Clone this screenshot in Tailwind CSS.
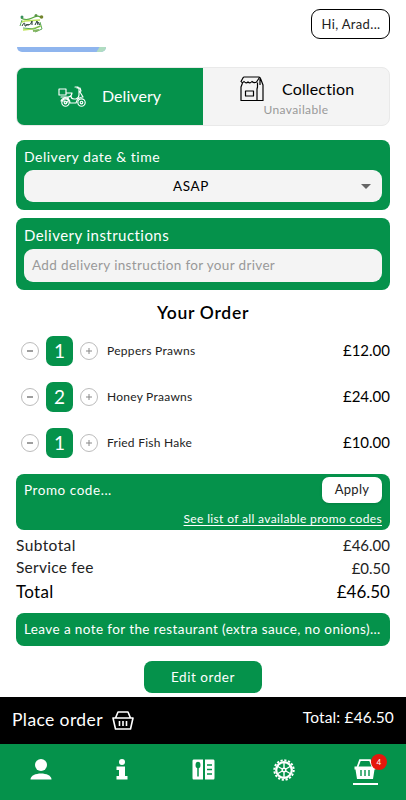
<!DOCTYPE html>
<html lang="en">
<head>
<meta charset="utf-8">
<title>Your order</title>
<script src="https://cdn.jsdelivr.net/npm/@tailwindcss/browser@4"></script>
</head>
<body class="flex h-[800px] w-[406px] flex-col overflow-hidden bg-white font-['Lato','Liberation_Sans',sans-serif] text-black">
<header class="flex h-[47px] shrink-0 items-start justify-between pr-4 pl-[18px] pt-[9px]">
  <svg class="mt-[4px]" width="28" height="22" viewBox="0 0 28 22" fill="none">
    <path d="M3 5q5 3 11 0t8-1" stroke="#56a83c" stroke-width="1.2"/>
    <path d="M4 9 7 8 22 7M5 17l9-1 9-3" stroke="#bfe45a" stroke-width="1.6"/>
    <path d="M2 13 4 7M5 15l11 1 6-3M22 9l2 7-7 3" stroke="#5cab59" stroke-width="1"/>
    <path d="M4 13q3-6 3 0 1 1 2-2 1 3 2 0 1 2 3-3v4M17 12l2-4 1 4M20 9l2 3" stroke="#253c33" stroke-width="1"/>
    <circle cx="4" cy="4" r="1.5" fill="#398f5d"/><circle cx="18" cy="2.500" r="1.500" fill="#5a9447"/><circle cx="23.500" cy="4" r="1.800" fill="#73842d"/>
    <path d="M15 18l6-1" stroke="#83b45f" stroke-width="2"/>
  </svg>
  <button class="h-[30px] w-[79px] rounded-[9px] border border-black pl-px text-[13px] leading-[28px] tracking-[0.35px] text-[#222]">Hi, Arad...</button>
</header>
<main class="flex h-[650px] shrink-0 flex-col px-4">
  <div class="ml-px flex h-[5px] w-[89px] shrink-0 justify-end overflow-hidden rounded-b-[8px] bg-[#8fb5ee]"><span class="h-[5px] w-[8px] -skew-x-[30deg] bg-[#b0dcc1]"></span></div>
  <section class="mt-[15px] flex h-[59px] shrink-0 overflow-hidden rounded-[8px] border border-[#e9e9e9] bg-[#f4f4f4]">
    <div class="-my-px -ml-px flex w-[187px] items-center bg-[#05924b] pl-[42px] text-white">
      <svg width="29" height="22" viewBox="0 0 29 22" fill="none" stroke="white" stroke-width="1.150" stroke-linejoin="round" stroke-linecap="round">
        <path d="M1 3h7v6H1zM3 11h7c3 0 4-3 4-4H8M10 11c1 3 0 5-2 6M14 7l-1 3c0 2 1 3 3 3h2c2-1 3-2 3-4V3l-1-2h-3M19 2h3l1 3-2 1M22 6l3 5c-4 0-6 2-7 6h-6c0-3-2-5-5-5-2 0-3 1-4 3h4"/>
        <circle cx="7.500" cy="16.500" r="3.700"/><circle cx="7.500" cy="16.500" r="1.300"/><circle cx="23.500" cy="16.500" r="3.700"/><circle cx="23.500" cy="16.500" r="1.300"/>
      </svg>
      <span class="ml-[15px] pb-px text-[16px] tracking-[0.05px]">Delivery</span>
    </div>
    <div class="flex flex-1 flex-col pt-[8px]">
      <div class="flex h-[25px] items-center pl-[37px]">
        <svg width="24" height="26" viewBox="0 0 24 26" fill="none" stroke="black" stroke-width="1.200" stroke-linejoin="round">
          <path d="M3.500 1H19q1 0 1.500 1.500L23 9v15.500H1V11l1.500-4M3.500 1 1 5.500q1.500 2 3 0 2 2.500 4 .5 2 2 4-.5 2 2 4.500.5L19.500 1.500M17.500 6.500V11l-.5 2v11.500M20 3v6"/><path d="M5.500 15h8v5h-8z"/>
        </svg>
        <span class="ml-[18px] text-[16px] tracking-[0.15px]">Collection</span>
      </div>
      <span class="text-center text-[12px] leading-[17px] tracking-[0.4px] text-[#999]">Unavailable</span>
    </div>
  </section>
  <section class="mt-[14px] h-[70px] shrink-0 rounded-[8px] bg-[#05924b] px-2">
    <div class="h-[30px] text-[14px] leading-[34px] tracking-[0.5px] text-white">Delivery date &amp; time</div>
    <div class="flex h-[32px] items-center rounded-[9px] bg-[#f4f4f4] pr-[11px]">
      <span class="flex-1 pr-[3px] text-center text-[13.500px] tracking-[0.6px]">ASAP</span>
      <svg width="10" height="5" viewBox="0 0 10 5"><path d="M0 0h10L5 5z" fill="#666"/></svg>
    </div>
  </section>
  <section class="mt-2 h-[72px] shrink-0 rounded-[8px] bg-[#05924b] px-2">
    <div class="h-[31px] text-[15px] leading-[35px] tracking-[0.45px] text-white">Delivery instructions</div>
    <div class="h-[33px] rounded-[9px] bg-[#f4f4f4] pl-2 text-[13.500px] leading-[33px] tracking-[0.350px] text-[#999]">Add delivery instruction for your driver</div>
  </section>
  <h1 class="h-[38px] shrink-0 text-center text-[17.500px] leading-[46px] font-semibold tracking-[0.7px]">Your Order</h1>
  <ul class="flex shrink-0 flex-col">
    <li class="flex h-[46px] items-center pl-[5px]">
      <svg width="18" height="18" viewBox="0 0 18 18" fill="none"><circle cx="9" cy="9" r="8.500" stroke="#aaa" stroke-width=".8"/><path d="M6 9h6" stroke="#888" stroke-width="1.600"/></svg>
      <span class="ml-[7px] h-[30px] w-[27px] rounded-[7px] bg-[#05924b] text-center text-[19px] leading-[29px] text-white">1</span>
      <svg class="ml-[7px]" width="18" height="18" viewBox="0 0 18 18" fill="none"><circle cx="9" cy="9" r="8.500" stroke="#aaa" stroke-width=".8"/><path d="M6 9h6M9 6v6" stroke="#888"/></svg>
      <span class="ml-[9px] flex-1 text-[12px] tracking-[0.3px] text-[#222]">Peppers Prawns</span><span class="pb-px text-[15px]">£12.00</span>
    </li>
    <li class="flex h-[46px] items-center pl-[5px]">
      <svg width="18" height="18" viewBox="0 0 18 18" fill="none"><circle cx="9" cy="9" r="8.500" stroke="#aaa" stroke-width=".8"/><path d="M6 9h6" stroke="#888" stroke-width="1.600"/></svg>
      <span class="ml-[7px] h-[30px] w-[27px] rounded-[7px] bg-[#05924b] text-center text-[19px] leading-[29px] text-white">2</span>
      <svg class="ml-[7px]" width="18" height="18" viewBox="0 0 18 18" fill="none"><circle cx="9" cy="9" r="8.500" stroke="#aaa" stroke-width=".8"/><path d="M6 9h6M9 6v6" stroke="#888"/></svg>
      <span class="ml-[9px] flex-1 text-[12px] tracking-[0.250px] text-[#222]">Honey Praawns</span><span class="pb-px text-[15px]">£24.00</span>
    </li>
    <li class="flex h-[46px] items-center pl-[5px]">
      <svg width="18" height="18" viewBox="0 0 18 18" fill="none"><circle cx="9" cy="9" r="8.500" stroke="#aaa" stroke-width=".8"/><path d="M6 9h6" stroke="#888" stroke-width="1.600"/></svg>
      <span class="ml-[7px] h-[30px] w-[27px] rounded-[7px] bg-[#05924b] text-center text-[19px] leading-[29px] text-white">1</span>
      <svg class="ml-[7px]" width="18" height="18" viewBox="0 0 18 18" fill="none"><circle cx="9" cy="9" r="8.500" stroke="#aaa" stroke-width=".8"/><path d="M6 9h6M9 6v6" stroke="#888"/></svg>
      <span class="ml-[9px] flex-1 text-[12px] tracking-[0.250px] text-[#222]">Fried Fish Hake</span><span class="pb-px text-[15px]">£10.00</span>
    </li>
  </ul>
  <section class="mt-[8px] flex h-[56px] shrink-0 flex-col rounded-[8px] bg-[#05924b] px-2 pt-[3px] text-white">
    <div class="flex h-[26px] items-center justify-between text-[13.500px] tracking-[0.55px]">
      <span>Promo code...</span>
      <button class="h-[26px] w-[60px] rounded-[7px] bg-white text-[13px] tracking-[0.3px] text-[#222] shadow-sm">Apply</button>
    </div>
    <a class="mt-[5px] self-end text-[12px] leading-[22px] tracking-[0.350px] underline underline-offset-2">See list of all available promo codes</a>
  </section>
  <dl class="mt-[4px] shrink-0 text-[15px] text-[#222]">
    <div class="flex h-[23px] items-center justify-between"><dt class="text-[15.500px] tracking-[0.4px]">Subtotal</dt><dd>£46.00</dd></div>
    <div class="flex h-[22px] items-center justify-between"><dt class="text-[15.500px] tracking-[0.250px]">Service fee</dt><dd>£0.50</dd></div>
    <div class="flex h-[26px] items-center justify-between text-[17px] text-black"><dt class="tracking-[0.3px]">Total</dt><dd>£46.50</dd></div>
  </dl>
  <div class="mt-[8px] h-[33px] shrink-0 rounded-[8px] bg-[#05924b] px-2 text-[13.500px] leading-[33px] tracking-[0.4px] whitespace-nowrap text-white">Leave a note for the restaurant (extra sauce, no onions)...</div>
  <button class="mt-[15px] h-[32px] w-[118px] shrink-0 self-center rounded-[8px] bg-[#05924b] text-[13.500px] tracking-[0.55px] text-white">Edit order</button>
</main>
<section class="flex h-[47px] shrink-0 items-center bg-black pr-3 pl-3 text-white">
  <span class="text-[17.500px] tracking-[0.4px]">Place order</span>
  <svg class="ml-[9px]" width="22" height="20" viewBox="0 0 22 20" fill="none" stroke="white" stroke-width="1.600" stroke-linejoin="round"><path d="M3.500 7 6 1h10l2.500 6M1 7h20l-2.500 11h-15zM7.500 10v5M11 10v5M14.500 10v5"/></svg>
  <span class="mb-[5px] ml-auto text-[15.500px] tracking-[0.150px]">Total: £46.50</span>
</section>
<nav class="flex h-[56px] shrink-0 bg-[#05924b] text-white">
  <div class="flex flex-1 justify-center pt-[15px]"><svg width="22" height="21" viewBox="0 0 22 21" fill="currentColor"><circle cx="11" cy="6" r="6"/><path d="M.5 20.500c0-8 21-8 21 0z"/></svg></div>
  <div class="flex flex-1 justify-center pt-[15px]"><svg width="12" height="21" viewBox="0 0 12 21" fill="currentColor"><circle cx="6" cy="3" r="3"/><path d="M.5 7.500H9V17h2.500v3.500H.5V17H3v-6H.5z"/></svg></div>
  <div class="flex flex-1 justify-center pt-[15px]"><svg width="23" height="21" viewBox="0 0 23 21"><path d="M1.500.5H11v20H1.500Q.5 20.500.5 19V2Q.5.500 1.500.5M13 .5h8.500Q22.500.500 22.500 2v17q0 1.500-1 1.500H13z" fill="white"/><ellipse cx="6" cy="6" rx="2.500" ry="3.200" fill="#05924b"/><path d="M6 8v9.500M15 6h5M15 10.500h5M15 15h5" stroke="#05924b" stroke-width="1.500"/></svg></div>
  <div class="flex flex-1 justify-center pt-[15px]"><svg width="22" height="22" viewBox="0 0 22 22" fill="none" stroke="white"><circle cx="11" cy="11" r="7.800" stroke-width="2.200"/><circle cx="11" cy="11" r="9.700" stroke-width="2" stroke-dasharray="2.200 1.610"/><path d="M11 3v16M4 7l14 8M18 7 4 15" stroke-width="1.400"/><circle cx="11" cy="11" r="2.500" fill="white" stroke="none"/><circle cx="11" cy="11" r="1.100" fill="#05924b" stroke="none"/></svg></div>
  <div class="relative flex flex-1 flex-col items-center pt-[15px]">
    <svg width="22" height="21" viewBox="0 0 22 21"><path d="M3.500 8 6 1.200h10L18.500 8" fill="none" stroke="white" stroke-width="1.800"/><path d="M.5 7.500h21v3h-1L19 20H3L1.500 10.500h-1z" fill="white"/><path d="M7 11v6M11 11v6M15 11v6" stroke="#05924b" stroke-width="1.400"/></svg>
    <span class="mt-[3px] h-[2px] w-[25px] bg-white"></span>
    <span class="absolute top-[10px] left-[46px] h-4 w-4 rounded-full bg-[#e5170c] text-center text-[8px] leading-[16px]">4</span>
  </div>
</nav>
</body>
</html>
